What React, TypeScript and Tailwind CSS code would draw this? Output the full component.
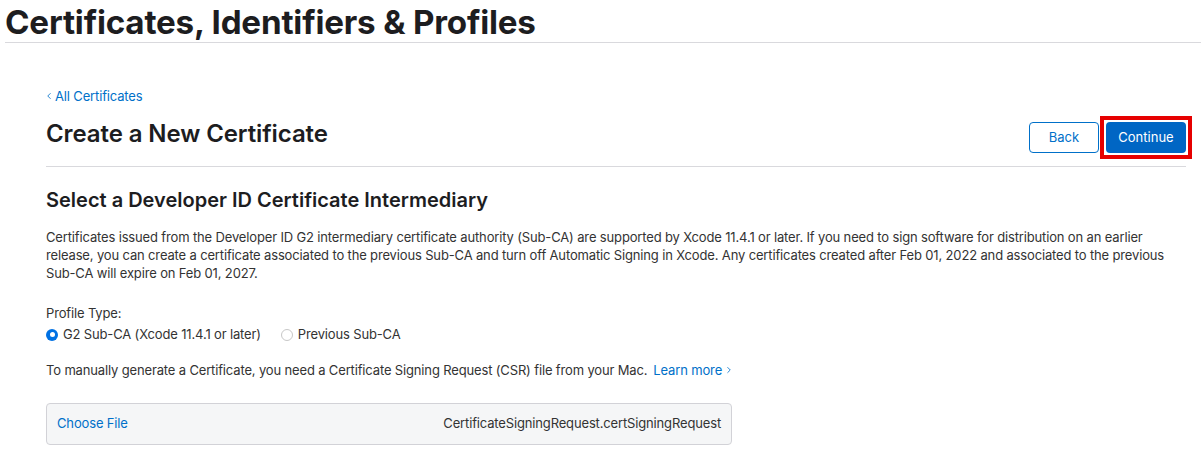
import { ChevronLeft, ChevronRight } from "lucide-react";

const font = { fontFamily: "Inter, 'Noto Sans', sans-serif" };

function Radio({ checked, label }: { checked?: boolean; label: string }) {
  return (
    <label className="flex items-center gap-[5px] text-[13px] tracking-[-0.15px] text-[#333]">
      {checked ? (
        <span className="w-[12px] h-[12px] rounded-full bg-[#0071e3] flex items-center justify-center">
          <span className="w-[5px] h-[5px] rounded-full bg-white" />
        </span>
      ) : (
        <span className="w-[12px] h-[12px] rounded-full border border-[#c7c7c7] bg-white" />
      )}
      {label}
    </label>
  );
}

export default function App() {
  return (
    <div className="bg-white w-[1201px] h-[453px] overflow-hidden text-[#1d1d1f]" style={font}>
      {/* Page title */}
      <div className="pl-[5px] pt-[3px]">
        <h1 className="text-[33.2px] leading-[38px] font-bold tracking-[-0.2px] text-[#1d1d1f]">
          Certificates, Identifiers &amp; Profiles
        </h1>
        <div className="mt-[1px] h-px bg-[#d9d9dd]" />
      </div>

      <div className="pl-[46px] pr-[15px]">
        <a className="mt-[45px] flex items-center text-[13px] leading-[16px] tracking-[-0.15px] text-[#0070c9]">
          <ChevronLeft className="w-[10px] h-[10px] -ml-[2px] mr-[1px]" strokeWidth={2} />
          All Certificates
        </a>

        {/* Header row */}
        <div className="flex items-start justify-between mt-[6px] pb-[13px] border-b border-[#d9d9dd]">
          <h2 className="text-[24px] leading-[30px] font-semibold tracking-[-0.1px] mt-[9px]">Create a New Certificate</h2>
          <div className="flex items-center gap-[1px] mt-[12px] -mr-[6px]">
            <button className="w-[70px] h-[31px] rounded-[4px] border border-[#0070c9] text-[#0070c9] text-[13px] bg-white">
              Back
            </button>
            <div className="border-[4px] border-[#e60000] p-[2px] -my-[6px]">
              <button className="block w-[80px] h-[31px] rounded-[4px] bg-[#0066c4] text-white text-[13px]">
                Continue
              </button>
            </div>
          </div>
        </div>

        <h3 className="mt-[21px] text-[20px] leading-[24px] font-semibold">
          Select a Developer ID Certificate Intermediary
        </h3>

        <p className="mt-[16px] text-[13px] leading-[18px] tracking-[-0.15px] text-[#333]">
          Certificates issued from the Developer ID G2 intermediary certificate authority (Sub-CA) are supported by Xcode 11.4.1 or later. If you need to sign software for distribution on an earlier release, you can create a certificate associated to the previous Sub-CA and turn off Automatic Signing in Xcode. Any certificates created after Feb 01, 2022 and associated to the previous Sub-CA will expire on Feb 01, 2027.
        </p>

        <div className="mt-[22px] text-[13px] leading-[18px] tracking-[-0.15px] text-[#333]">Profile Type:</div>
        <div className="mt-[3px] flex items-center gap-[20px]">
          <Radio checked label="G2 Sub-CA (Xcode 11.4.1 or later)" />
          <Radio label="Previous Sub-CA" />
        </div>

        <p className="mt-[16px] text-[13px] leading-[18px] tracking-[-0.15px] text-[#333] flex items-center">
          To manually generate a Certificate, you need a Certificate Signing Request (CSR) file from your Mac.
          <a className="ml-[6px] text-[#0070c9] flex items-center">
            Learn more
            <ChevronRight className="w-[10px] h-[10px] ml-[2px]" strokeWidth={2} />
          </a>
        </p>

        <div className="mt-[24px] w-[686px] h-[42px] rounded-[4px] border border-[#d2d2d7] bg-[#f5f6f7] flex items-center justify-between px-[10px] text-[13px] tracking-[-0.15px]">
          <span className="text-[#0070c9]">Choose File</span>
          <span className="text-[#333]">CertificateSigningRequest.certSigningRequest</span>
        </div>
      </div>
    </div>
  );
}
